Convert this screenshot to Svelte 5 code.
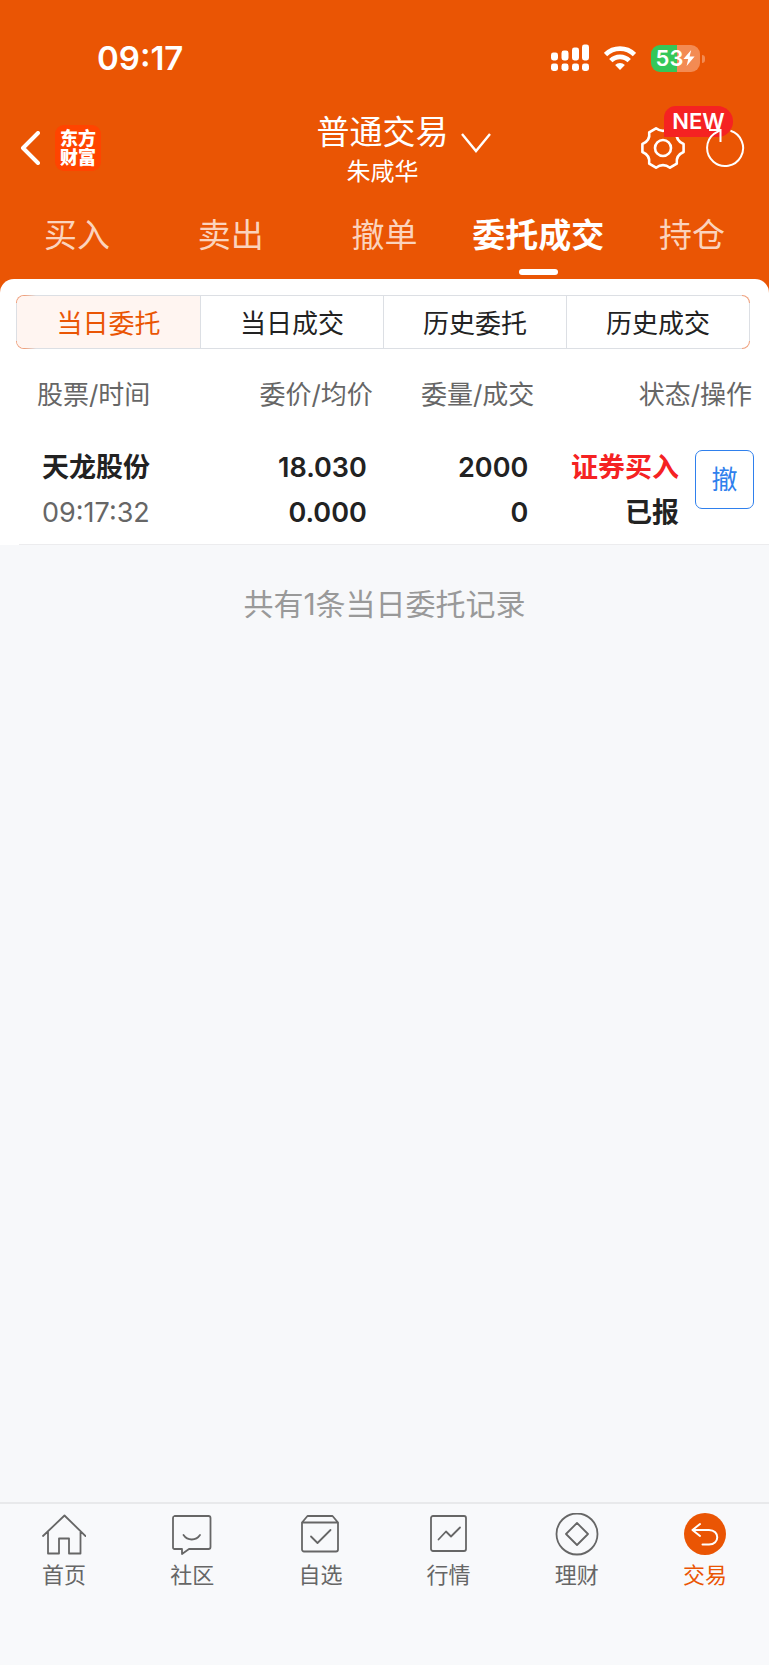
<script>
  const tabs = ['买入', '卖出', '撤单', '委托成交', '持仓'];
  const segments = ['当日委托', '当日成交', '历史委托', '历史成交'];
  const orders = [
    { name: '天龙股份', time: '09:17:32', price: '18.030', avg: '0.000', qty: '2000', done: '0', side: '证券买入', status: '已报' }
  ];
  const nav = [
    { id: 'home', label: '首页' },
    { id: 'community', label: '社区' },
    { id: 'watch', label: '自选' },
    { id: 'market', label: '行情' },
    { id: 'wealth', label: '理财' },
    { id: 'trade', label: '交易' }
  ];

  let tab = $state('委托成交');
  let segment = $state('当日委托');
  let page = $state('trade');
</script>

<div class="app">
  <header>
    <div class="status">
      <span class="clock">09:17</span>
      <div class="indicators">
        <svg width="38" height="28" viewBox="0 0 38 28" fill="#fff">
          <rect x="0" y="8.500" width="7" height="8" rx="2.400" />
          <rect x="10.500" y="6.500" width="7" height="10" rx="2.400" />
          <rect x="21" y="3.500" width="7" height="13" rx="2.400" />
          <rect x="31" y="0.500" width="7" height="16" rx="2.400" />
          <rect x="0" y="19.500" width="7" height="7.500" rx="2.400" />
          <rect x="10.500" y="19.500" width="7" height="7.500" rx="2.400" />
          <rect x="21" y="19.500" width="7" height="7.500" rx="2.400" />
          <rect x="31" y="19.500" width="7" height="7.500" rx="2.400" />
        </svg>
        <svg width="32" height="24" viewBox="0 0 32 24" fill="none" stroke="#fff" stroke-width="4.8">
          <path d="M1.500 8.600a20.600 20.600 0 0 1 29 0" />
          <path d="M6.800 14.600a13 13 0 0 1 18.400 0" />
          <path d="M16 24l-4.900-5a7 7 0 0 1 9.800 0z" fill="#fff" stroke="none" />
        </svg>
        <div class="battery">
          <span class="level">53</span>
          <svg width="12" height="16" viewBox="0 0 12 16" fill="#fff"><path d="M8.2 0L0.400 9h4.800L3.600 16l8-9.400H6.600z" /></svg>
        </div>
      </div>
    </div>

    <div class="bar">
      <div class="left">
        <button class="icon" aria-label="返回">
          <svg width="20" height="34" viewBox="0 0 20 34" fill="none" stroke="#fff" stroke-width="4" stroke-linecap="round" stroke-linejoin="round"><path d="M18 2L3 17l15 15" /></svg>
        </button>
        <a class="logo" href="#home">东方<br>财富</a>
      </div>
      <button class="account">
        <span class="names">
          <span class="title">普通交易</span>
          <span class="owner">朱咸华</span>
        </span>
        <svg class="chevron" width="30" height="20" viewBox="0 0 30 20" fill="none" stroke="#fff" stroke-width="2.4"><path d="M1 1l14 17L29 1" /></svg>
      </button>
      <div class="right">
        <button class="icon gear" aria-label="设置">
          <svg width="44" height="44" viewBox="0 0 44 44" fill="none" stroke="#fff" stroke-width="2.6" stroke-linejoin="round">
            <path d="M42.600 18V26Q34.600 29.300 35.800 37.600L29 41.700Q22 36.500 15 41.700L8.200 37.600Q9.400 29.300 1.400 26V18Q9.400 14.800 8.200 6.400L15 2.300Q22 7.500 29 2.300L35.800 6.400Q34.600 14.800 42.600 18z" />
            <circle cx="22" cy="22" r="8" />
          </svg>
          <span class="badge">NEW</span>
        </button>
        <button class="icon refresh" aria-label="刷新">
          <svg width="40" height="40" viewBox="0 0 40 40" fill="none" stroke="#fff" stroke-width="2"><path d="M25.500 2.800a18 18 0 1 1-16.500 3L15.500 2M4 2h11.500v12" /></svg>
        </button>
      </div>
    </div>

    <nav class="tabs">
      {#each tabs as t}
        <button class:active={tab === t} onclick={() => (tab = t)}>{t}</button>
      {/each}
    </nav>
  </header>

  <main>
    <section class="panel">
      <div class="segments">
        {#each segments as s}
          <button class:active={segment === s} onclick={() => (segment = s)}>{s}</button>
        {/each}
      </div>

      <table>
        <colgroup>
          <col class="c-name">
          <col class="c-price">
          <col class="c-qty">
          <col class="c-side">
          <col class="c-act">
        </colgroup>
        <thead>
          <tr>
            <th>股票/时间</th>
            <th>委价/均价</th>
            <th>委量/成交</th>
            <th colspan="2">状态/操作</th>
          </tr>
        </thead>
        <tbody>
          {#each orders as o}
            <tr>
              <td><div>{o.name}</div><div class="time">{o.time}</div></td>
              <td><div>{o.price}</div><div>{o.avg}</div></td>
              <td><div>{o.qty}</div><div>{o.done}</div></td>
              <td><div class="buy">{o.side}</div><div>{o.status}</div></td>
              <td><button class="cancel">撤</button></td>
            </tr>
          {/each}
        </tbody>
      </table>
    </section>
    <p class="summary">共有1条当日委托记录</p>
  </main>

  <nav class="bottom">
    {#each nav as n}
      <a href="#{n.id}" class:active={page === n.id} onclick={() => (page = n.id)}>
        <svg width="44" height="44" viewBox="0 0 44 44" fill="none" stroke="currentColor" stroke-width="1.8" stroke-linejoin="round" stroke-linecap="round">
          {#if n.id === 'home'}
            <path d="M1 23L22.500 2.500 43.500 23M6 19v21.500h11V25.500h10v15h11.500V19" />
          {:else if n.id === 'community'}
            <path d="M4.500 3h34a2 2 0 0 1 2 2v29a2 2 0 0 1-2 2H19l-7 5v-5H4.500a1.500 1.500 0 0 1-1.500-1.500V5a2 2 0 0 1 1.500-2z" />
            <path d="M13.500 22c4 6 12.500 6 16.500 0" />
          {:else if n.id === 'watch'}
            <path d="M4 9.500h36v27a2 2 0 0 1-2 2H6a2 2 0 0 1-2-2zL9.500 3h25L40 9.500" />
            <path d="M13 23.500l6.500 6.500L32.500 17" />
          {:else if n.id === 'market'}
            <rect x="4" y="3" width="35" height="35" rx="2" />
            <path d="M11.500 26.500l7.500-8 5 5L33 14.500" />
          {:else if n.id === 'wealth'}
            <circle cx="22" cy="21" r="20.500" />
            <path d="M22 10l11 11-11 11-11-11z" />
          {:else}
            <circle cx="22" cy="21" r="21" fill="currentColor" stroke="none" />
            <path d="M17 11l-7.500 6 7.500 6M10 17h16c11 0 11 14.500 0 14.500h-6.500" stroke="#fff" stroke-width="2" />
          {/if}
        </svg>
        <span>{n.label}</span>
      </a>
    {/each}
  </nav>
</div>

<style>
  :global(body) {
    margin: 0;
    background: #f7f8fa;
  }

  .app {
    display: flex;
    flex-direction: column;
    min-height: 100vh;
    background: #f7f8fa;
    color: #222;
    font-family: Inter, 'Noto Sans CJK SC', sans-serif;
  }

  button {
    padding: 0;
    border: 0;
    background: none;
    color: inherit;
    font: inherit;
    cursor: pointer;
  }

  a {
    color: inherit;
    text-decoration: none;
  }

  svg {
    display: block;
    flex: none;
  }

  header {
    padding-bottom: 10px;
    background: #ea5504;
    color: #fff;
  }

  .status {
    display: flex;
    align-items: center;
    justify-content: space-between;
    height: 36px;
    padding: 40px 64px 24px 97px;
  }

  .clock {
    font-size: 33px;
    font-weight: 600;
  }

  .indicators {
    display: flex;
    align-items: center;
    gap: 15px;
  }

  .battery {
    position: relative;
    display: flex;
    align-items: center;
    justify-content: center;
    width: 49px;
    height: 27px;
    margin-right: 5px;
    border-radius: 9px;
    background: linear-gradient(90deg, #34c759 26px, #f38b53 26px);
  }

  .battery::after {
    content: '';
    position: absolute;
    right: -5px;
    top: 10px;
    width: 3px;
    height: 8px;
    border-radius: 0 3px 3px 0;
    background: #f38b53;
  }

  .level {
    font-size: 22px;
    font-weight: 600;
  }

  .bar {
    display: grid;
    grid-template-columns: 1fr auto 1fr;
    align-items: center;
    height: 96px;
    padding: 0 24px 0 20px;
  }

  .left,
  .right {
    display: flex;
    align-items: center;
    gap: 15px;
  }

  .right {
    justify-content: flex-end;
    gap: 20px;
  }

  .logo {
    display: flex;
    justify-content: center;
    width: 46px;
    padding: 4px 0;
    border-radius: 9px;
    background: #ff4400;
    font-size: 18px;
    font-weight: 900;
    line-height: 19px;
  }

  .account {
    position: relative;
  }

  .names {
    display: flex;
    flex-direction: column;
    align-items: center;
    padding-top: 3px;
  }

  .title {
    font-size: 33px;
    line-height: 44px;
  }

  .owner {
    font-size: 24px;
    line-height: 36px;
  }

  .chevron {
    position: absolute;
    left: 100%;
    top: 26px;
    margin-left: 12px;
  }

  .gear {
    position: relative;
  }

  .badge {
    position: absolute;
    left: 23px;
    bottom: 33px;
    width: 69px;
    border-radius: 12px 16px 16px 0;
    background: #f52222;
    font-size: 22px;
    font-weight: 600;
    line-height: 31px;
  }

  .refresh {
    position: relative;
  }

  .tabs {
    display: grid;
    grid-template-columns: repeat(5, 1fr);
  }

  .tabs button {
    position: relative;
    height: 73px;
    color: #fbd3bd;
    font-size: 33px;
    white-space: nowrap;
  }

  .tabs .active {
    color: #fff;
    font-weight: 700;
  }

  .tabs .active::after {
    content: '';
    position: absolute;
    left: 50%;
    bottom: -6px;
    width: 39px;
    height: 6px;
    margin-left: -19px;
    border-radius: 3px;
    background: #fff;
  }

  main {
    flex: 1;
    background: linear-gradient(#ea5504 20px, #f7f8fa 20px);
  }

  .panel {
    padding-top: 16px;
    border-radius: 14px 14px 0 0;
    background: #fff;
  }

  /* hairline under the list, inset on the left */
  .panel::after {
    content: '';
    display: block;
    height: 1px;
    margin-left: 19px;
    background: #ececee;
  }

  /* grey frame, orange only around the rounded corners */
  .segments {
    display: grid;
    grid-template-columns: repeat(4, 1fr);
    margin: 0 19px 0 16px;
    border: 1px solid transparent;
    border-radius: 8px;
    background:
      linear-gradient(#fff, #fff) padding-box,
      linear-gradient(transparent 8px, #dcdfe4 8px, #dcdfe4 calc(100% - 8px), transparent calc(100% - 8px)) border-box,
      linear-gradient(90deg, #ef9f7b 8px, #dcdfe4 20px, #dcdfe4 calc(100% - 8px), #ef9f7b calc(100% - 8px)) border-box;
    overflow: hidden;
  }

  .segments button {
    height: 52px;
    padding-bottom: 2px;
    font-size: 26px;
  }

  .segments button + button {
    border-left: 1px solid #dcdfe4;
  }

  .segments .active {
    background: #fff5f1;
    color: #ea5504;
  }

  table {
    width: 100%;
    table-layout: fixed;
    border-collapse: collapse;
  }

  .c-name { width: 28%; }
  .c-price { width: 21%; }
  .c-qty { width: 21%; }
  .c-side { width: 20%; }
  .c-act { width: 10%; }

  th {
    padding: 28px 4px 30px 0;
    color: #666;
    font-size: 26px;
    font-weight: 400;
    line-height: 36px;
    text-align: right;
    white-space: nowrap;
  }

  th:first-child {
    padding-left: 37px;
    text-align: left;
  }

  th:last-child {
    padding-right: 17px;
  }

  td {
    padding: 2px 10px 9px 0;
    font-size: 27px;
    font-weight: 600;
    line-height: 45px;
    text-align: right;
    vertical-align: top;
    white-space: nowrap;
  }

  td:first-child {
    padding-left: 42px;
    text-align: left;
  }

  td:nth-child(4) {
    padding-right: 13px;
  }

  td:last-child {
    padding: 7px 15px 0 0;
  }

  .time {
    color: #666;
    font-weight: 400;
  }

  .buy {
    color: #f52222;
  }

  .cancel {
    width: 59px;
    height: 59px;
    border: 1px solid #2f80ed;
    border-radius: 7px;
    color: #2f80ed;
    font-size: 26px;
    font-weight: 400;
  }

  .summary {
    margin: 36px 0;
    color: #999;
    font-size: 30px;
    line-height: 46px;
    text-align: center;
  }

  .bottom {
    display: grid;
    grid-template-columns: repeat(6, 1fr);
    padding: 9px 0 72px;
    border-top: 2px solid #e8e9eb;
    background: #f8f9fb;
    color: #666;
  }

  .bottom a {
    display: flex;
    flex-direction: column;
    align-items: center;
    font-size: 22px;
    line-height: 36px;
  }

  .bottom .active {
    color: #ea5504;
  }
</style>
